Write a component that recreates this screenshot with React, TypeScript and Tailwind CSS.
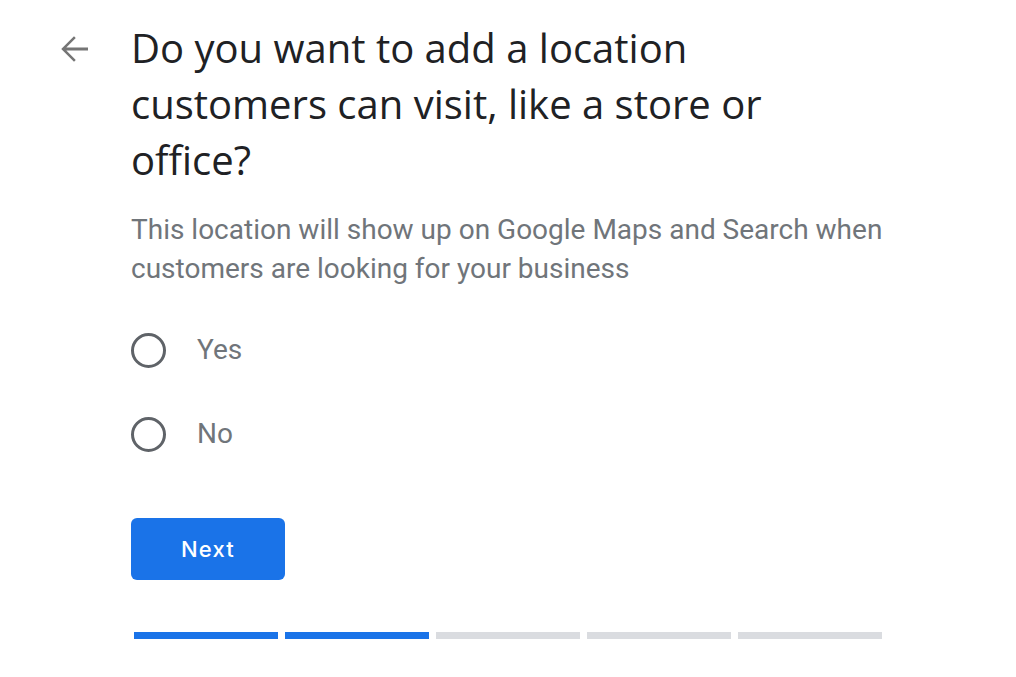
import React from "react";

export default function App() {
  const steps = [true, true, false, false, false];
  return (
    <div className="w-[1016px] h-[677px] bg-white flex pl-[53px] pt-[20px]" style={{ fontFamily: "Roboto, 'Liberation Sans', sans-serif" }}>
      <div className="w-[42px] h-[42px] mt-[8px] shrink-0">
        <svg width="42" height="42" viewBox="0 0 24 24" fill="#757575">
          <path d="M20 11.1H7.6l5.4-5.4L12 4.7l-7.3 7.3 7.3 7.3 1-1L7.6 12.9H20z" />
        </svg>
      </div>
      <div className="ml-[36px] flex flex-col">
        <h1 className="text-[40px] leading-[56px] text-[#202124] w-[680px]" style={{ fontFamily: "'Open Sans', Roboto, sans-serif" }}>
          Do you want to add a location customers can visit, like a store or office?
        </h1>
        <p className="mt-[22px] text-[28px] leading-[39px] text-[#70757a] w-[800px]">
          This location will show up on Google Maps and Search when customers are looking for your business
        </p>
        <div className="mt-[20px] flex flex-col">
          {["Yes", "No"].map((l) => (
            <label key={l} className="h-[84px] flex items-center">
              <span className="w-[35px] h-[35px] rounded-full border-[3px] border-[#5f6368]" />
              <span className="ml-[31px] text-[28px] text-[#70757a]">{l}</span>
            </label>
          ))}
        </div>
        <button
          className="mt-[42px] w-[154px] h-[62px] rounded-[6px] bg-[#1a73e8] text-white text-[22px] font-medium tracking-[1.2px]"
          style={{ fontFamily: "Inter, Roboto, sans-serif" }}
        >
          Next
        </button>
        <div className="mt-[52px] ml-[3px] flex gap-[7px]">
          {steps.map((a, i) => (
            <div key={i} className={a ? "w-[144px] h-[7px] bg-[#1a73e8]" : "w-[144px] h-[7px] bg-[#dadce0]"} />
          ))}
        </div>
      </div>
    </div>
  );
}
